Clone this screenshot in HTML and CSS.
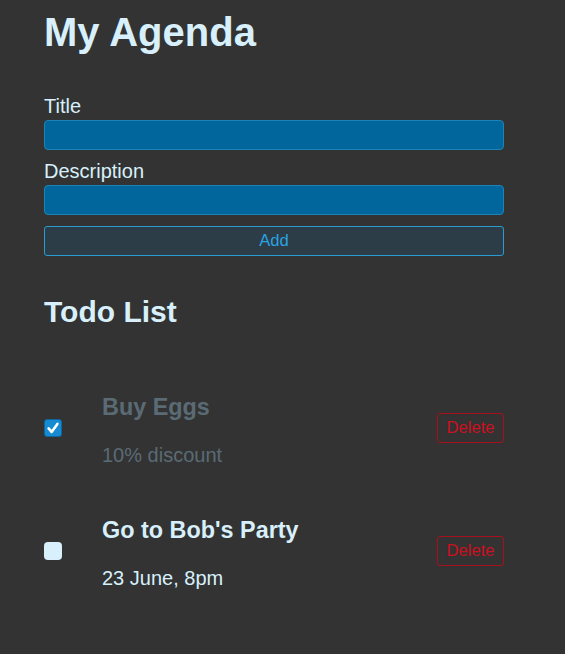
FILE: index.html
```html
<!DOCTYPE html>
<html lang="en">
<head>
<meta charset="utf-8">
<title>My Agenda</title>
<link rel="stylesheet" href="styles.css">
</head>
<body>
<main class="app">
  <h1 class="app-title">My Agenda</h1>
  <form class="form">
    <label class="label" for="title">Title</label>
    <input class="field" id="title" type="text">
    <label class="label label-second" for="desc">Description</label>
    <input class="field" id="desc" type="text">
    <button class="add" type="button">Add</button>
  </form>
  <h2 class="list-title">Todo List</h2>
  <ul class="todos">
    <li class="todo done">
      <span class="check checked">
        <svg viewBox="0 0 18 18" width="18" height="18"><path d="M4.6 9.4 L7.6 12.9 L13.4 4.9" fill="none" stroke="#fff" stroke-width="2.6" stroke-linecap="round" stroke-linejoin="round"/></svg>
      </span>
      <div class="todo-text">
        <h3 class="todo-title">Buy Eggs</h3>
        <p class="todo-desc">10% discount</p>
      </div>
      <button class="delete" type="button">Delete</button>
    </li>
    <li class="todo">
      <span class="check"></span>
      <div class="todo-text">
        <h3 class="todo-title">Go to Bob's Party</h3>
        <p class="todo-desc">23 June, 8pm</p>
      </div>
      <button class="delete" type="button">Delete</button>
    </li>
  </ul>
</main>
</body>
</html>
```

FILE: styles.css
```css
html, body {
  margin: 0;
  padding: 0;
  background: #333333;
}
body {
  font-family: "Liberation Sans", Arial, sans-serif;
  font-size: 20px;
  color: #d7f0fb;
}
.app {
  width: 460px;
  padding: 9px 44px 0 44px;
}
.app-title {
  margin: 0;
  font-size: 40px;
  line-height: 46px;
  font-weight: bold;
}
.form {
  margin-top: 40px;
  display: flex;
  flex-direction: column;
}
.label {
  display: block;
  line-height: 23px;
  margin-bottom: 2px;
}
.label-second {
  margin-top: 10px;
}
.field {
  box-sizing: border-box;
  width: 100%;
  height: 30px;
  margin: 0;
  background: #00669b;
  border: 1px solid #1c83b8;
  border-radius: 4px;
  color: #d7f0fb;
  font: inherit;
  padding: 0 8px;
}
.add {
  box-sizing: border-box;
  margin-top: 11px;
  width: 100%;
  height: 30px;
  background: #2c3d47;
  border: 1px solid #2a9ccf;
  border-radius: 3px;
  color: #2aa3e0;
  font-family: "Liberation Sans", Arial, sans-serif;
  font-size: 16.6px;
  padding: 0;
}
.list-title {
  margin: 39px 0 0 0;
  font-size: 30px;
  line-height: 34.5px;
  font-weight: bold;
}
.todos {
  list-style: none;
  margin: 41px 0 0 0;
  padding: 0;
}
.todo {
  display: flex;
  align-items: center;
  margin-bottom: 6px;
}
.check {
  box-sizing: border-box;
  flex: none;
  width: 18px;
  height: 18px;
  border-radius: 4px;
  background: #d7f0fb;
  display: flex;
  margin-top: -1px;
}
.check.checked {
  background: #178bd2;
  border: 1px solid #0e66a0;
  border-radius: 3px;
}
.check.checked svg {
  margin: -1px;
}
.todo-text {
  flex: 1;
  margin-left: 40px;
}
.todo-title {
  margin: 23.4px 0 0 0;
  font-size: 23.4px;
  line-height: 27px;
  font-weight: bold;
}
.todo-desc {
  margin: 23.4px 0 20px 0;
  line-height: 23px;
}
.done .todo-text {
  color: #5a6b75;
}
.delete {
  box-sizing: border-box;
  flex: none;
  height: 30px;
  width: 67px;
  padding: 0;
  background: transparent;
  border: 1px solid #a80f1c;
  border-radius: 3px;
  color: #cc1020;
  font-family: "Liberation Sans", Arial, sans-serif;
  font-size: 16.6px;
  margin-top: -2px;
}
```
